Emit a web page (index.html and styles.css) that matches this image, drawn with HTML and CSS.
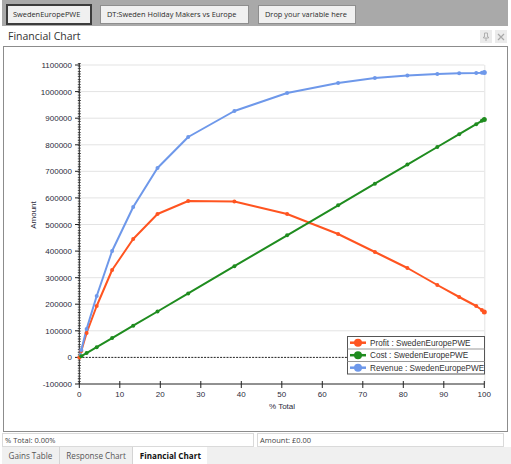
FILE: index.html
```html
<!DOCTYPE html>
<html>
<head>
<meta charset="utf-8">
<link rel="stylesheet" href="styles.css">
</head>
<body>
<div class="app">
  <div class="topbar">
    <div class="var-btn selected">SwedenEuropePWE</div>
    <div class="var-btn">DT:Sweden Holiday Makers vs Europe</div>
    <div class="var-btn">Drop your variable here</div>
  </div>
  <div class="titlebar">
    <span class="title">Financial Chart</span>
    <div class="win-btns">
      <span class="win-btn">
        <svg width="8" height="10" viewBox="0 0 8 10"><path d="M2.5 1h3v4h1v1h-5v-1h1z M4 6v3" fill="none" stroke="#b0b0b0" stroke-width="1"/></svg>
      </span>
      <span class="win-btn">
        <svg width="8" height="8" viewBox="0 0 8 8"><path d="M1 1L7 7M7 1L1 7" stroke="#a8a8a8" stroke-width="1.2"/></svg>
      </span>
    </div>
  </div>
  <div class="frame">
    <svg class="chart" width="503" height="384" viewBox="4 47 503 384" font-family="Liberation Sans, Arial, sans-serif">
      <g stroke="#e3e3e3" stroke-width="1">
        <line x1="79.3" y1="65" x2="484.3" y2="65"/>
        <line x1="79.3" y1="91.6" x2="484.3" y2="91.6"/>
        <line x1="79.3" y1="118.2" x2="484.3" y2="118.2"/>
        <line x1="79.3" y1="144.8" x2="484.3" y2="144.8"/>
        <line x1="79.3" y1="171.3" x2="484.3" y2="171.3"/>
        <line x1="79.3" y1="197.9" x2="484.3" y2="197.9"/>
        <line x1="79.3" y1="224.5" x2="484.3" y2="224.5"/>
        <line x1="79.3" y1="251.1" x2="484.3" y2="251.1"/>
        <line x1="79.3" y1="277.7" x2="484.3" y2="277.7"/>
        <line x1="79.3" y1="304.2" x2="484.3" y2="304.2"/>
        <line x1="79.3" y1="330.8" x2="484.3" y2="330.8"/>
        <line x1="484.8" y1="65" x2="484.8" y2="384"/>
      </g>
      <line x1="79.3" y1="357.4" x2="484.3" y2="357.4" stroke="#222" stroke-width="1" stroke-dasharray="2 1.2"/>
      <g stroke="#222" stroke-width="1">
        <line x1="79.3" y1="63" x2="79.3" y2="384"/>
        <line x1="79.3" y1="384" x2="484.3" y2="384"/>
        <line x1="75" y1="65" x2="79.3" y2="65"/>
        <line x1="75" y1="91.6" x2="79.3" y2="91.6"/>
        <line x1="75" y1="118.2" x2="79.3" y2="118.2"/>
        <line x1="75" y1="144.8" x2="79.3" y2="144.8"/>
        <line x1="75" y1="171.3" x2="79.3" y2="171.3"/>
        <line x1="75" y1="197.9" x2="79.3" y2="197.9"/>
        <line x1="75" y1="224.5" x2="79.3" y2="224.5"/>
        <line x1="75" y1="251.1" x2="79.3" y2="251.1"/>
        <line x1="75" y1="277.7" x2="79.3" y2="277.7"/>
        <line x1="75" y1="304.2" x2="79.3" y2="304.2"/>
        <line x1="75" y1="330.8" x2="79.3" y2="330.8"/>
        <line x1="75" y1="357.4" x2="79.3" y2="357.4"/>
        <line x1="75" y1="384" x2="79.3" y2="384"/>
        <line x1="79.3" y1="381" x2="79.3" y2="388"/>
        <line x1="119.8" y1="381" x2="119.8" y2="388"/>
        <line x1="160.3" y1="381" x2="160.3" y2="388"/>
        <line x1="200.8" y1="381" x2="200.8" y2="388"/>
        <line x1="241.3" y1="381" x2="241.3" y2="388"/>
        <line x1="281.8" y1="381" x2="281.8" y2="388"/>
        <line x1="322.3" y1="381" x2="322.3" y2="388"/>
        <line x1="362.8" y1="381" x2="362.8" y2="388"/>
        <line x1="403.3" y1="381" x2="403.3" y2="388"/>
        <line x1="443.8" y1="381" x2="443.8" y2="388"/>
        <line x1="484.3" y1="381" x2="484.3" y2="388"/>
      </g>
      <line x1="79.3" y1="63" x2="79.3" y2="384" stroke="#333" stroke-width="3" stroke-dasharray="0.8 1.85"/>
      <g font-size="8" fill="#2b2b3b" text-anchor="end">
        <text x="72" y="68">1100000</text>
        <text x="72" y="94.6">1000000</text>
        <text x="72" y="121.2">900000</text>
        <text x="72" y="147.8">800000</text>
        <text x="72" y="174.3">700000</text>
        <text x="72" y="200.9">600000</text>
        <text x="72" y="227.5">500000</text>
        <text x="72" y="254.1">400000</text>
        <text x="72" y="280.7">300000</text>
        <text x="72" y="307.2">200000</text>
        <text x="72" y="333.8">100000</text>
        <text x="72" y="360.4">0</text>
        <text x="72" y="387">-100000</text>
      </g>
      <g font-size="8" fill="#2b2b3b" text-anchor="middle">
        <text x="79.3" y="397">0</text>
        <text x="119.8" y="397">10</text>
        <text x="160.3" y="397">20</text>
        <text x="200.8" y="397">30</text>
        <text x="241.3" y="397">40</text>
        <text x="281.8" y="397">50</text>
        <text x="322.3" y="397">60</text>
        <text x="362.8" y="397">70</text>
        <text x="403.3" y="397">80</text>
        <text x="443.8" y="397">90</text>
        <text x="484.3" y="397">100</text>
        <text x="282" y="409">% Total</text>
        <text x="0" y="0" transform="translate(36 215) rotate(-90)">Amount</text>
      </g>
      <g fill="none" stroke-width="2" stroke-linejoin="round">
        <polyline stroke="#ff5420" points="79.3,357.4 81.3,351 86.6,333 96.7,306 112.1,270 133.2,239 157.5,214 188.2,201 234.4,201.5 287.1,214 338.1,234 374.9,252 407.4,268 437.3,285 459.2,297 476.2,306 481.9,310 484.3,312"/>
        <polyline stroke="#1f8c1f" points="79.3,357.4 81.3,356.2 86.6,353.1 96.7,347.2 112.1,338.1 133.2,325.7 157.5,311.5 188.2,293.4 234.4,266.2 287.1,235.3 338.1,205.3 374.9,183.7 407.4,164.6 437.3,147 459.2,134.2 476.2,124.2 481.9,120.8 484.3,119.5"/>
        <polyline stroke="#6e98ea" points="79.3,357.4 81.3,350 86.6,329 96.7,296 112.1,251 133.2,207 157.5,168 188.2,137 234.4,111 287.1,93 338.1,83 374.9,78 407.4,75.5 437.3,74 459.2,73.2 476.2,73 481.9,72.8 484.3,72.6"/>
      </g>
      <g fill="#ff5420">
        <circle cx="79.3" cy="357.4" r="2"/><circle cx="81.3" cy="351" r="2"/><circle cx="86.6" cy="333" r="2"/><circle cx="96.7" cy="306" r="2"/><circle cx="112.1" cy="270" r="2"/><circle cx="133.2" cy="239" r="2"/><circle cx="157.5" cy="214" r="2"/><circle cx="188.2" cy="201" r="2"/><circle cx="234.4" cy="201.5" r="2"/><circle cx="287.1" cy="214" r="2"/><circle cx="338.1" cy="234" r="2"/><circle cx="374.9" cy="252" r="2"/><circle cx="407.4" cy="268" r="2"/><circle cx="437.3" cy="285" r="2"/><circle cx="459.2" cy="297" r="2"/><circle cx="476.2" cy="306" r="2"/><circle cx="481.9" cy="310" r="2"/><circle cx="484.3" cy="312" r="2.5"/>
      </g>
      <g fill="#1f8c1f">
        <circle cx="81.3" cy="356.2" r="2"/><circle cx="86.6" cy="353.1" r="2"/><circle cx="96.7" cy="347.2" r="2"/><circle cx="112.1" cy="338.1" r="2"/><circle cx="133.2" cy="325.7" r="2"/><circle cx="157.5" cy="311.5" r="2"/><circle cx="188.2" cy="293.4" r="2"/><circle cx="234.4" cy="266.2" r="2"/><circle cx="287.1" cy="235.3" r="2"/><circle cx="338.1" cy="205.3" r="2"/><circle cx="374.9" cy="183.7" r="2"/><circle cx="407.4" cy="164.6" r="2"/><circle cx="437.3" cy="147" r="2"/><circle cx="459.2" cy="134.2" r="2"/><circle cx="476.2" cy="124.2" r="2"/><circle cx="481.9" cy="120.8" r="2"/><circle cx="484.3" cy="119.5" r="2.5"/>
      </g>
      <g fill="#6e98ea">
        <circle cx="81.3" cy="350" r="2"/><circle cx="86.6" cy="329" r="2"/><circle cx="96.7" cy="296" r="2"/><circle cx="112.1" cy="251" r="2"/><circle cx="133.2" cy="207" r="2"/><circle cx="157.5" cy="168" r="2"/><circle cx="188.2" cy="137" r="2"/><circle cx="234.4" cy="111" r="2"/><circle cx="287.1" cy="93" r="2"/><circle cx="338.1" cy="83" r="2"/><circle cx="374.9" cy="78" r="2"/><circle cx="407.4" cy="75.5" r="2"/><circle cx="437.3" cy="74" r="2"/><circle cx="459.2" cy="73.2" r="2"/><circle cx="476.2" cy="73" r="2"/><circle cx="481.9" cy="72.8" r="2"/><circle cx="484.3" cy="72.6" r="2.5"/>
      </g>
      <g class="legend">
        <rect x="347.5" y="336.5" width="137" height="37.5" fill="#fff" stroke="#555" stroke-width="1"/>
        <line x1="347.5" y1="349" x2="484.5" y2="349" stroke="#999"/>
        <line x1="347.5" y1="361.5" x2="484.5" y2="361.5" stroke="#999"/>
        <line x1="350" y1="342.7" x2="366" y2="342.7" stroke="#ff5420" stroke-width="2.5"/>
        <circle cx="358" cy="342.7" r="4" fill="#ff5420"/>
        <line x1="350" y1="355.2" x2="366" y2="355.2" stroke="#1f8c1f" stroke-width="2.5"/>
        <circle cx="358" cy="355.2" r="4" fill="#1f8c1f"/>
        <line x1="350" y1="367.7" x2="366" y2="367.7" stroke="#6e98ea" stroke-width="2.5"/>
        <circle cx="358" cy="367.7" r="4" fill="#6e98ea"/>
        <g font-size="8.2" fill="#333">
          <text x="370" y="345.6">Profit : SwedenEuropePWE</text>
          <text x="370" y="358.1">Cost : SwedenEuropePWE</text>
          <text x="370" y="370.6">Revenue : SwedenEuropePWE</text>
        </g>
      </g>
    </svg>
  </div>
  <div class="status">
    <div class="status-cell left">% Total: 0.00%</div>
    <div class="status-cell right">Amount: £0.00</div>
  </div>
  <div class="tabs">
    <div class="tab">Gains Table</div>
    <div class="tab">Response Chart</div>
    <div class="tab active">Financial Chart</div>
  </div>
</div>
</body>
</html>
```

FILE: styles.css
```css
html, body {
  margin: 0;
  padding: 0;
  background: #ffffff;
}
body {
  width: 511px;
  height: 464px;
  overflow: hidden;
  font-family: "Open Sans", "Noto Sans", sans-serif;
}
.app {
  display: flex;
  flex-direction: column;
  width: 511px;
  height: 464px;
}
.topbar {
  margin-left: 2px;
  width: 506px;
  height: 26px;
  background: #a9a9a9;
  display: flex;
  align-items: flex-start;
  padding-left: 4px;
  box-sizing: border-box;
  gap: 8px;
}
.var-btn {
  box-sizing: border-box;
  height: 19px;
  margin-top: 5px;
  padding: 0 6px;
  background: #f0f0f0;
  border: 1px solid #8e8e8e;
  font-size: 7.4px;
  line-height: 17px;
  color: #2a2a2a;
  white-space: nowrap;
}
.var-btn:nth-child(2) {
  width: 149px;
}
.var-btn:nth-child(3) {
  width: 98px;
  margin-left: 1px;
}
.var-btn.selected {
  width: 86px;
  height: 21px;
  margin-top: 4px;
  border: 2px solid #3c3c3c;
  line-height: 17px;
  padding: 0 5px;
}
.titlebar {
  height: 20px;
  display: flex;
  align-items: center;
  justify-content: space-between;
  padding: 0 4px 0 8px;
  box-sizing: border-box;
}
.title {
  font-size: 10.5px;
  color: #333;
  line-height: 20px;
}
.win-btns {
  display: flex;
  gap: 3px;
  margin-top: 1px;
}
.win-btn {
  width: 12px;
  height: 13px;
  background: #ebebeb;
  display: flex;
  align-items: center;
  justify-content: center;
}
.frame {
  margin-left: 3px;
  width: 505px;
  height: 386px;
  border: 1px solid #8c8c8c;
  box-sizing: border-box;
  background: #fff;
}
.chart {
  display: block;
}
.status {
  display: flex;
  gap: 3px;
  margin-top: 1px;
  margin-left: 2px;
  height: 14px;
}
.status-cell {
  box-sizing: border-box;
  height: 14px;
  border: 1px solid #dadada;
  background: #fff;
  font-size: 7.5px;
  line-height: 12px;
  color: #444;
  padding-left: 2px;
  white-space: nowrap;
}
.status-cell.left {
  width: 252px;
}
.status-cell.right {
  width: 247px;
}
.tabs {
  display: flex;
  height: 17px;
  margin-left: 2px;
  background: #f0f0f0;
}
.tab {
  box-sizing: border-box;
  height: 17px;
  padding: 0 6.5px;
  font-size: 8.1px;
  line-height: 17px;
  color: #555;
  border-right: 1px solid #d4d4d4;
  white-space: nowrap;
}
.tab.active {
  background: #fff;
  color: #111;
  font-weight: bold;
  border-right: none;
}
```
